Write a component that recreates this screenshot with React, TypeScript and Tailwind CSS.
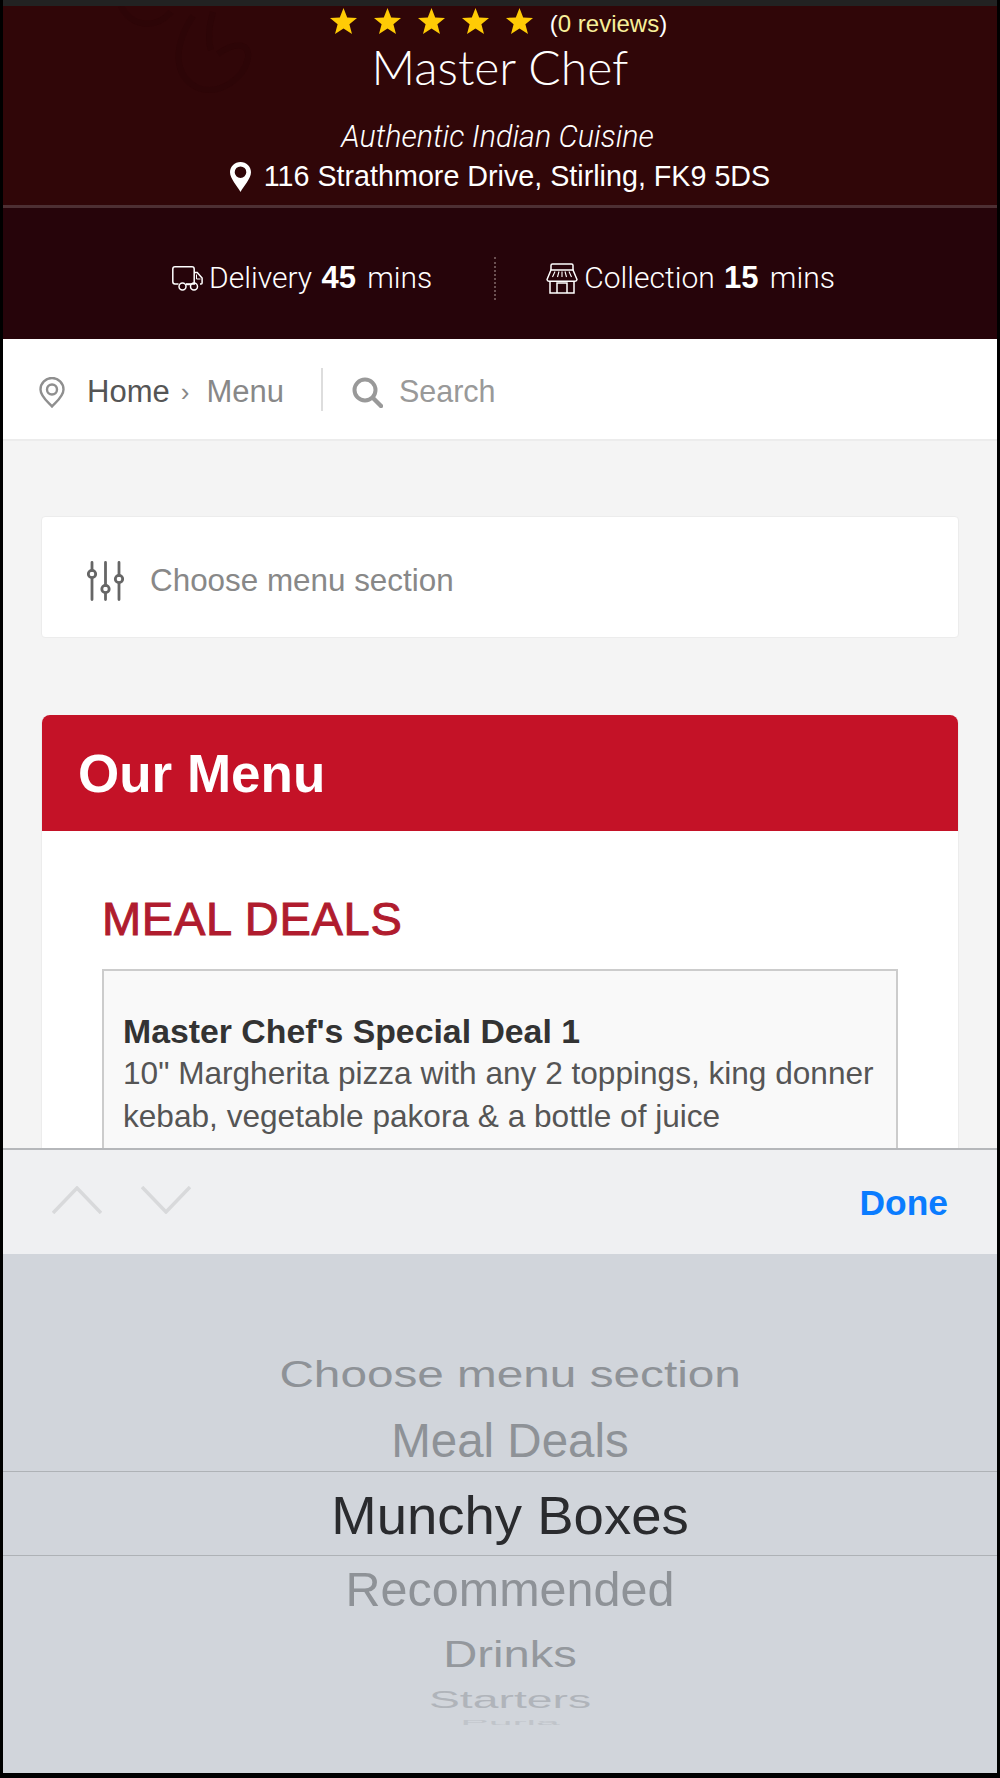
const sans = "font-['Liberation_Sans',Arial,sans-serif]";
const light = "font-['Roboto','Liberation_Sans',sans-serif] font-light";

const Star = () => (
  <svg viewBox="0 0 27 26" className="h-[26px] w-[27px] fill-[#ffcb05]">
    <polygon points="13.5,0 17.2,9.4 27,9.9 19.4,16.2 22,26 13.5,20.5 5,26 7.6,16.2 0,9.9 9.8,9.4" />
  </svg>
);

const PinSolid = () => (
  <svg viewBox="0 0 21 30" className="h-[30px] w-[21px]">
    <path
      fillRule="evenodd"
      fill="#fff"
      d="M10.5 0C4.7 0 0 4.600 0 10.300 0 16.600 7.600 24.500 10.500 30 13.400 24.500 21 16.600 21 10.300 21 4.600 16.300 0 10.500 0zm0 4.400a5.800 5.800 0 1 1 0 11.600 5.800 5.800 0 0 1 0-11.600z"
    />
  </svg>
);

const TruckIcon = () => (
  <svg viewBox="0 0 31 25" className="h-[25px] w-[31px] fill-none stroke-white" strokeWidth="1.500">
    <path d="M6.500 18H3A2.200 2.200 0 0 1 .8 15.800V3A2.200 2.200 0 0 1 3 .8h17A2.200 2.200 0 0 1 22.200 3v15H14" />
    <path d="M22.200 6.500h3l4.900 5.500v5a1 1 0 0 1-1 1h-1.100" />
    <path d="M24.500 8.500v4.500h4" strokeWidth="1" />
    <circle cx="10.500" cy="20.500" r="3.500" />
    <circle cx="22" cy="20.500" r="3.500" />
    <path d="M14 18.500h4.500" />
  </svg>
);

const StoreIcon = () => (
  <svg viewBox="0 0 32 31" className="h-[31px] w-[32px] fill-none stroke-white" strokeWidth="1.500">
    <path d="M5 7V2.500A1.500 1.500 0 0 1 6.500 1h19A1.500 1.500 0 0 1 27 2.500V7" />
    <path d="M5 7h22l4 9.500a2 2 0 0 1-2 1.800H3a2 2 0 0 1-2-1.800z" />
    <path d="M9 8.500 6.500 14M13 8.500 11.500 14M16 8.500V14M19 8.500l1.500 5.500M23 8.500l2.500 5.500" strokeWidth="1.100" />
    <path d="M4 18.500V30h24V18.500" />
    <path d="M11 30V20h10v10" />
  </svg>
);

const PinOutline = () => (
  <svg viewBox="0 0 26 31" className="h-[31px] w-[26px] fill-none stroke-[#8f8f8f]" strokeWidth="2.400">
    <path d="M13 29.500C9 25 1.500 19.500 1.500 12.500a11.500 11.500 0 0 1 23 0c0 7-7.500 12.500-11.500 17z" />
    <circle cx="13" cy="12.500" r="5" />
  </svg>
);

const SearchIcon = () => (
  <svg viewBox="0 0 31 31" className="h-[31px] w-[31px] fill-none stroke-[#999]" strokeLinecap="round">
    <circle cx="13" cy="13" r="10.500" strokeWidth="4" />
    <path d="M21 21l8 8" strokeWidth="4.500" />
  </svg>
);

const SlidersIcon = () => (
  <svg viewBox="0 0 37 40" className="h-[40px] w-[37px] fill-none stroke-[#666]" strokeWidth="2.800" strokeLinecap="round">
    <path d="M5 1.500v8M5 17v21.500" />
    <circle cx="5" cy="13" r="3.700" />
    <path d="M18.500 1.500v23M18.500 32v6.500" />
    <circle cx="18.500" cy="28" r="3.700" />
    <path d="M32 1.500v13M32 22v16.500" />
    <circle cx="32" cy="18" r="3.700" />
  </svg>
);

const wheel = [
  { label: "Choose menu section", h: "h-[66px] pt-[4px]", cls: "text-[36px] scale-x-[1.325] text-[#8e9297]" },
  { label: "Meal Deals", h: "h-[65px] pt-[4px]", cls: "text-[47.5px] text-[#8e9297]" },
];

const wheelBelow = [
  { label: "Recommended", h: "h-[70px] pb-[4px]", cls: "text-[48.500px] text-[#8e9297]" },
  { label: "Drinks", h: "h-[58px]", cls: "text-[36px] scale-x-[1.31] text-[#94989d]" },
  { label: "Starters", h: "h-[34px] pb-[2px]", cls: "text-[24px] scale-x-[1.93] text-[#b0b4ba]" },
  { label: "Purla", h: "h-[10px]", cls: "text-[12px] scale-x-[3.56] scale-y-[.6] text-[#c0c4ca]" },
];

export default function App() {
  return (
    <div className={`${sans} flex h-[1778px] w-[1000px] flex-col overflow-hidden border-x-[3px] border-b-[5px] border-x-black border-b-black bg-[#f4f4f4]`}>
      <div className="h-[6px] shrink-0 bg-[#222]" />

      <header className="relative shrink-0 bg-[#300608] text-white">
        {/* faint swirl from the header's background image */}
        <svg viewBox="0 0 340 200" className="absolute top-0 left-0 h-[200px] w-[340px] fill-none stroke-[#2d0507]" strokeWidth="6">
          <path d="M118 0c8 18 32 26 50 6" />
          <path d="M190 10c-20 30-20 60 5 72 22 8 46-10 50-30 2-16-14-16-30-4" />
          <path d="M210 6c-4 14-6 26-2 38" />
        </svg>
        <div className="relative flex h-[202px] flex-col items-center border-b-[3px] border-[#4d2f33]">
          <div className="flex h-[30px] items-center gap-[17px] pr-[3px]">
            <Star />
            <Star />
            <Star />
            <Star />
            <Star />
            <span className="pt-[5px] text-[24px] text-white">
              (<span className="text-[#f7ef9a]">0 reviews</span>)
            </span>
          </div>
          <h1 className="mt-[1px] font-['Lato',sans-serif] text-[48px] leading-[60px] font-light">Master Chef</h1>
          <p className={`mt-[22px] pr-[5px] ${light} text-[30.500px] leading-[36px] italic`}>Authentic Indian Cuisine</p>
          <div className="mt-[3px] flex h-[38px] items-center gap-[13px]">
            <PinSolid />
            <span className="text-[28.700px]">116 Strathmore Drive, Stirling, FK9 5DS</span>
          </div>
        </div>
        <div className={`flex h-[131px] items-center justify-center bg-[#26040a] pt-[10px] pl-[7px] text-[30px] ${light}`}>
          <div className="flex items-center gap-[6px]">
            <TruckIcon />
            <span>
              Delivery <b className="ml-[2px] font-['Liberation_Sans'] text-[31px] font-bold">45</b> <span className="ml-[4px]">mins</span>
            </span>
          </div>
          <div className="mr-[50px] ml-[62px] h-[43px] border-l-2 border-dotted border-[#6b5052]" />
          <div className="flex items-center gap-[6px]">
            <StoreIcon />
            <span>
              Collection <b className="ml-[2px] font-['Liberation_Sans'] text-[31px] font-bold">15</b> <span className="ml-[4px]">mins</span>
            </span>
          </div>
        </div>
      </header>

      <div className="min-h-0 flex-1 overflow-hidden">
        <nav className="flex h-[102px] items-center border-b-2 border-[#ececec] bg-white pt-[6px] pl-[36px] text-[31px]">
          <PinOutline />
          <span className="ml-[22px] text-[#555]">Home</span>
          <span className="ml-[11px] text-[26px] text-[#888]">›</span>
          <span className="ml-[17px] text-[#888]">Menu</span>
          <div className="mr-[29px] ml-[37px] h-[43px] w-[2px] -translate-y-[3px] bg-[#ddd]" />
          <SearchIcon />
          <span className="ml-[16px] text-[30.500px] text-[#999]">Search</span>
        </nav>

        <div className="px-[38px] pt-[75px]">
          <div className="flex h-[122px] items-center rounded-[4px] border border-[#ececec] bg-white pt-[8px] pl-[45px]">
            <SlidersIcon />
            <span className="ml-[26px] text-[31.400px] text-[#888]">Choose menu section</span>
          </div>

          <section className="mt-[77px] rounded-[8px] border-x border-[#ececec] bg-white">
            <div className="flex h-[116px] items-center rounded-t-[8px] bg-[#c41227] pt-[2px] pl-[36px]">
              <h2 className="text-[53px] font-bold text-white">Our Menu</h2>
            </div>
            <div className="px-[60px] pt-[58px]">
              <h3 className="text-[47px] leading-[60px] tracking-[0.7px] text-[#b01c2e] [-webkit-text-stroke:1px_#b01c2e]">MEAL DEALS</h3>
              <div className="mt-[20px] border-2 border-[#ccc] bg-[#f9f9f9] px-[19px] pt-[40px] pb-[40px]">
                <p className="text-[33.800px] leading-[40px] font-bold text-[#333]">Master Chef's Special Deal 1</p>
                <p className="mt-[1px] text-[31.600px] leading-[43px] text-[#555]">
                  10" Margherita pizza with any 2 toppings, king donner kebab, vegetable pakora &amp; a bottle of juice
                </p>
              </div>
            </div>
          </section>
        </div>
      </div>

      <div className="flex h-[106px] shrink-0 items-center justify-between border-t-2 border-[#b5b7ba] bg-[#eff0f2] pr-[49px] pl-[49px]">
        <div className="mb-[4px] flex gap-[39px]">
          <svg viewBox="0 0 50 28" className="h-[28px] w-[50px] fill-none stroke-[#d8d9db]" strokeWidth="3.500">
            <path d="M1 27 25 2l24 25" />
          </svg>
          <svg viewBox="0 0 50 28" className="h-[28px] w-[50px] fill-none stroke-[#d8d9db]" strokeWidth="3.500">
            <path d="M1 1l24 25L49 1" />
          </svg>
        </div>
        <span className="pt-[4px] text-[35.400px] font-bold text-[#0a7cff]">Done</span>
      </div>

      <div className="h-[519px] min-h-0 shrink-0 overflow-hidden bg-[#d1d5db] pt-[86px]">
        {wheel.map((row) => (
          <div key={row.label} className={`flex ${row.h} items-center justify-center pl-[20px]`}>
            <span className={`whitespace-nowrap ${row.cls}`}>{row.label}</span>
          </div>
        ))}
        <div className="flex h-[85px] items-center justify-center border-y-[1.5px] border-[#aeb2b6] pt-[4px] pl-[20px]">
          <span className="text-[54.500px] text-[#2a2b2e]">Munchy Boxes</span>
        </div>
        {wheelBelow.map((row) => (
          <div key={row.label} className={`flex ${row.h} items-center justify-center pl-[20px]`}>
            <span className={`whitespace-nowrap ${row.cls}`}>{row.label}</span>
          </div>
        ))}
      </div>
    </div>
  );
}
